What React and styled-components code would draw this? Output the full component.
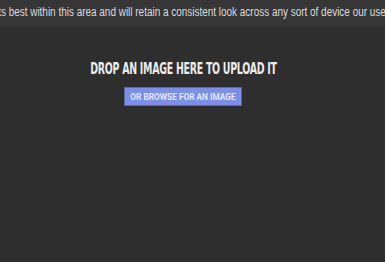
import React from "react";
import styled, { createGlobalStyle } from "styled-components";

const GlobalStyle = createGlobalStyle`
  html, body {
    margin: 0;
    padding: 0;
    background: #2e2e2e;
  }
  #root {
    min-height: 262px;
  }
`;

const Page = styled.div`
  width: 385px;
  height: 262px;
  overflow: hidden;
  background: #2e2e2e;
  display: flex;
  flex-direction: column;
`;

const Notice = styled.div`
  height: 27px;
  background: #363636;
  display: flex;
  justify-content: center;
  overflow: hidden;
`;

const NoticeText = styled.p`
  margin: 0;
  padding-top: 4px;
  white-space: nowrap;
  font-family: "Liberation Sans", Arial, sans-serif;
  font-size: 12.5px;
  line-height: 16px;
  color: #dcdcdc;
  flex-shrink: 0;
  transform: scaleX(0.796);
`;

const DropZone = styled.div`
  display: flex;
  flex-direction: column;
  align-items: center;
  padding: 33px 19px 0 0;
  gap: 9px;
`;

const Heading = styled.h2`
  margin: 0;
  font-family: "DejaVu Sans Condensed", "DejaVu Sans", sans-serif;
  font-weight: bold;
  font-size: 16px;
  line-height: 18px;
  letter-spacing: -0.4px;
  color: #ececec;
  text-transform: uppercase;
  white-space: nowrap;
  transform: scaleX(0.655);
`;

const BrowseButton = styled.button`
  width: 118px;
  height: 19px;
  padding: 0;
  background: #7b8fe8;
  border: 1px solid #5a68a8;
  color: #e4e8ff;
  font-family: Roboto, "Liberation Sans", sans-serif;
  font-weight: bold;
  font-size: 8.3px;
  text-transform: uppercase;
  cursor: pointer;
`;

export default function App() {
  return (
    <Page>
      <GlobalStyle />
      <Notice>
        <NoticeText>
          Your image will look its best within this area and will retain a consistent look across any sort of device our users use to view it here.
        </NoticeText>
      </Notice>
      <DropZone>
        <Heading>Drop an image here to upload it</Heading>
        <BrowseButton>or browse for an image</BrowseButton>
      </DropZone>
    </Page>
  );
}
